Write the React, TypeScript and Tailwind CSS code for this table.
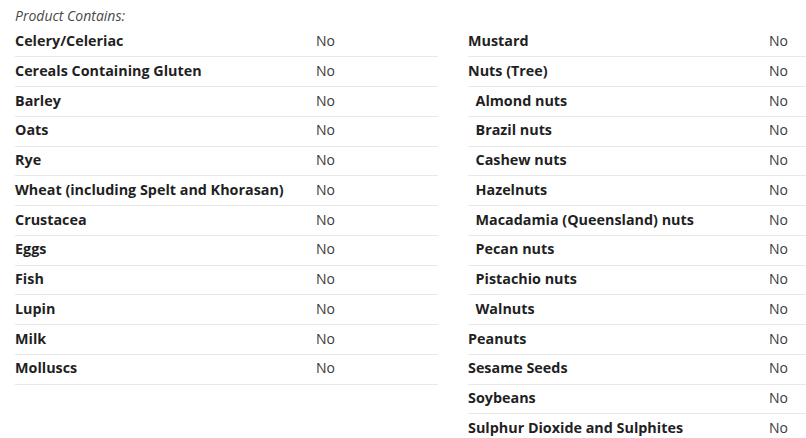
import React from "react";

interface Row {
  label: string;
  value: string;
  sub?: boolean;
}

const leftRows: Row[] = [
  { label: "Celery/Celeriac", value: "No" },
  { label: "Cereals Containing Gluten", value: "No" },
  { label: "Barley", value: "No" },
  { label: "Oats", value: "No" },
  { label: "Rye", value: "No" },
  { label: "Wheat (including Spelt and Khorasan)", value: "No" },
  { label: "Crustacea", value: "No" },
  { label: "Eggs", value: "No" },
  { label: "Fish", value: "No" },
  { label: "Lupin", value: "No" },
  { label: "Milk", value: "No" },
  { label: "Molluscs", value: "No" },
];

const rightRows: Row[] = [
  { label: "Mustard", value: "No" },
  { label: "Nuts (Tree)", value: "No" },
  { label: "Almond nuts", value: "No", sub: true },
  { label: "Brazil nuts", value: "No", sub: true },
  { label: "Cashew nuts", value: "No", sub: true },
  { label: "Hazelnuts", value: "No", sub: true },
  { label: "Macadamia (Queensland) nuts", value: "No", sub: true },
  { label: "Pecan nuts", value: "No", sub: true },
  { label: "Pistachio nuts", value: "No", sub: true },
  { label: "Walnuts", value: "No", sub: true },
  { label: "Peanuts", value: "No" },
  { label: "Sesame Seeds", value: "No" },
  { label: "Soybeans", value: "No" },
  { label: "Sulphur Dioxide and Sulphites", value: "No" },
];

function AllergenTable({ rows }: { rows: Row[] }) {
  return (
    <div className="flex flex-col">
      {rows.map((row) => (
        <div
          key={row.label}
          className="grid grid-cols-[301px_1fr] h-[29.75px] pt-[2.5px] border-b border-[#e8e8e8] shrink-0"
        >
          <div
            className={
              row.sub
                ? "pl-[7.5px] text-[14.35px] font-bold text-[#1f1f24] whitespace-nowrap"
                : "text-[14.35px] font-bold text-[#1f1f24] whitespace-nowrap"
            }
          >
            {row.label}
          </div>
          <div className="text-[#3a3a3a]">{row.value}</div>
        </div>
      ))}
    </div>
  );
}

export default function App() {
  return (
    <div className="w-[806px] h-[438px] overflow-hidden bg-white font-['Open_Sans',sans-serif] text-[14px] leading-[21px]">
      <div className="grid grid-cols-[423px_423px] gap-x-[30px] px-[15px] w-[921px]">
        <div>
          <div className="h-[27.5px] pt-[5px] italic text-[#4a4a4a]">Product Contains:</div>
          <AllergenTable rows={leftRows} />
        </div>
        <div>
          <div className="h-[27.5px]" />
          <AllergenTable rows={rightRows} />
        </div>
      </div>
    </div>
  );
}
